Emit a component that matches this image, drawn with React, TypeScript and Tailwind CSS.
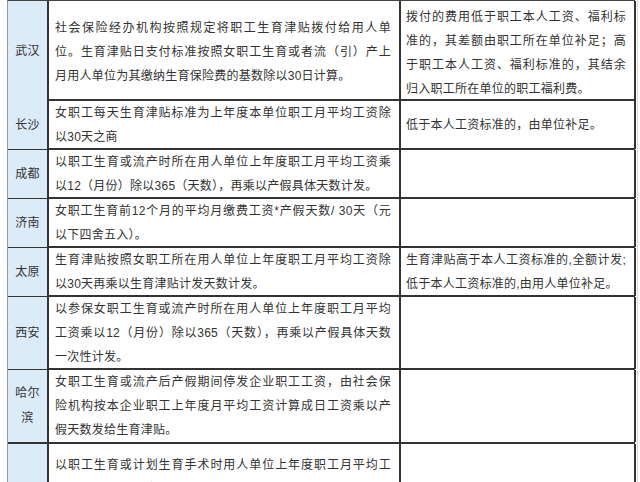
import React from "react";

type Cell = { lines: string[]; full: number; pad?: string };
type Row = { city: string[]; h: string; c2: Cell; c3: Cell };

const rows: Row[] = [
  {
    city: ["武汉"],
    h: "h-[100px]",
    c2: {
      full: 2,
      pad: "items-start pt-[15px]",
      lines: [
        "社会保险经办机构按照规定将职工生育津贴拨付给用人单",
        "位。生育津贴日支付标准按照女职工生育或者流（引）产上",
        "月用人单位为其缴纳生育保险费的基数除以30日计算。",
      ],
    },
    c3: {
      full: 3,
      pad: "items-start pt-[4px]",
      lines: [
        "拨付的费用低于职工本人工资、福利标",
        "准的，其差额由职工所在单位补足；高",
        "于职工本人工资、福利标准的，其结余",
        "归入职工所在单位的职工福利费。",
      ],
    },
  },
  {
    city: ["长沙"],
    h: "h-[49px]",
    c2: {
      full: 1,
      lines: ["女职工每天生育津贴标准为上年度本单位职工月平均工资除", "以30天之商"],
    },
    c3: { full: 0, lines: ["低于本人工资标准的，由单位补足。"] },
  },
  {
    city: ["成都"],
    h: "h-[49px]",
    c2: {
      full: 1,
      lines: [
        "以职工生育或流产时所在用人单位上年度职工月平均工资乘",
        "以12（月份）除以365（天数），再乘以产假具体天数计发。",
      ],
    },
    c3: { full: 0, lines: [] },
  },
  {
    city: ["济南"],
    h: "h-[49px]",
    c2: {
      full: 1,
      lines: ["女职工生育前12个月的平均月缴费工资*产假天数/ 30天（元", "以下四舍五入）。"],
    },
    c3: { full: 0, lines: [] },
  },
  {
    city: ["太原"],
    h: "h-[49px]",
    c2: {
      full: 1,
      lines: ["生育津贴按照女职工所在用人单位上年度职工月平均工资除", "以30天再乘以生育津贴计发天数计发。"],
    },
    c3: {
      full: 1,
      lines: ["生育津贴高于本人工资标准的,全额计发;", "低于本人工资标准的,由用人单位补足。"],
    },
  },
  {
    city: ["西安"],
    h: "h-[73px]",
    c2: {
      full: 2,
      lines: [
        "以参保女职工生育或流产时所在用人单位上年度职工月平均",
        "工资乘以12（月份）除以365（天数），再乘以产假具体天数",
        "一次性计发。",
      ],
    },
    c3: { full: 0, lines: [] },
  },
  {
    city: ["哈尔", "滨"],
    h: "h-[74px]",
    c2: {
      full: 2,
      lines: [
        "女职工生育或流产后产假期间停发企业职工工资，由社会保",
        "险机构按本企业职工上年度月平均工资计算成日工资乘以产",
        "假天数发给生育津贴。",
      ],
    },
    c3: { full: 0, lines: [] },
  },
  {
    city: [],
    h: "h-[74px]",
    c2: {
      full: 2,
      pad: "items-start pt-[9px]",
      lines: [
        "以职工生育或计划生育手术时用人单位上年度职工月平均工",
        "资为基数，按规定的产（休）假期计发，用人单位上年度职",
      ],
    },
    c3: { full: 0, lines: [] },
  },
];

function Lines({ cell }: { cell: Cell }) {
  return (
    <div className="w-full">
      {cell.lines.map((l, i) => (
        <div
          key={i}
          className={
            i < cell.full
              ? "whitespace-nowrap text-justify [text-align-last:justify]"
              : "whitespace-nowrap"
          }
        >
          {l}
        </div>
      ))}
    </div>
  );
}

export default function App() {
  return (
    <div className="flex w-[640px] h-[482px] overflow-hidden bg-white font-['Liberation_Sans','Noto_Sans_CJK_SC',sans-serif] text-[12px] leading-[24px] tracking-[0.25px] text-[#333]">
      <div className="ml-[7px] w-[628px] border-l border-t border-[#9a9a9a] border-t-[#444]">
        {rows.map((r, i) => (
          <div key={i} className={`grid grid-cols-[41px_352px_235px] border-b-2 border-[#333] ${r.h}`}>
            <div className="flex flex-col items-center justify-center bg-[#dcebf8] border-r-2 border-[#333]">
              {r.city.map((c, j) => (
                <span key={j} className="leading-[25px]">
                  {c}
                </span>
              ))}
            </div>
            <div className={`flex pl-[6px] pr-[8px] border-r-2 border-[#333] ${r.c2.pad ?? "items-center"}`}>
              <Lines cell={r.c2} />
            </div>
            <div className={`flex pl-[5px] pr-[8px] border-r-2 border-[#333] ${r.c3.pad ?? "items-center"}`}>
              <Lines cell={r.c3} />
            </div>
          </div>
        ))}
      </div>
      <div className="ml-[2px] w-px bg-[#dddddd]" />
    </div>
  );
}
